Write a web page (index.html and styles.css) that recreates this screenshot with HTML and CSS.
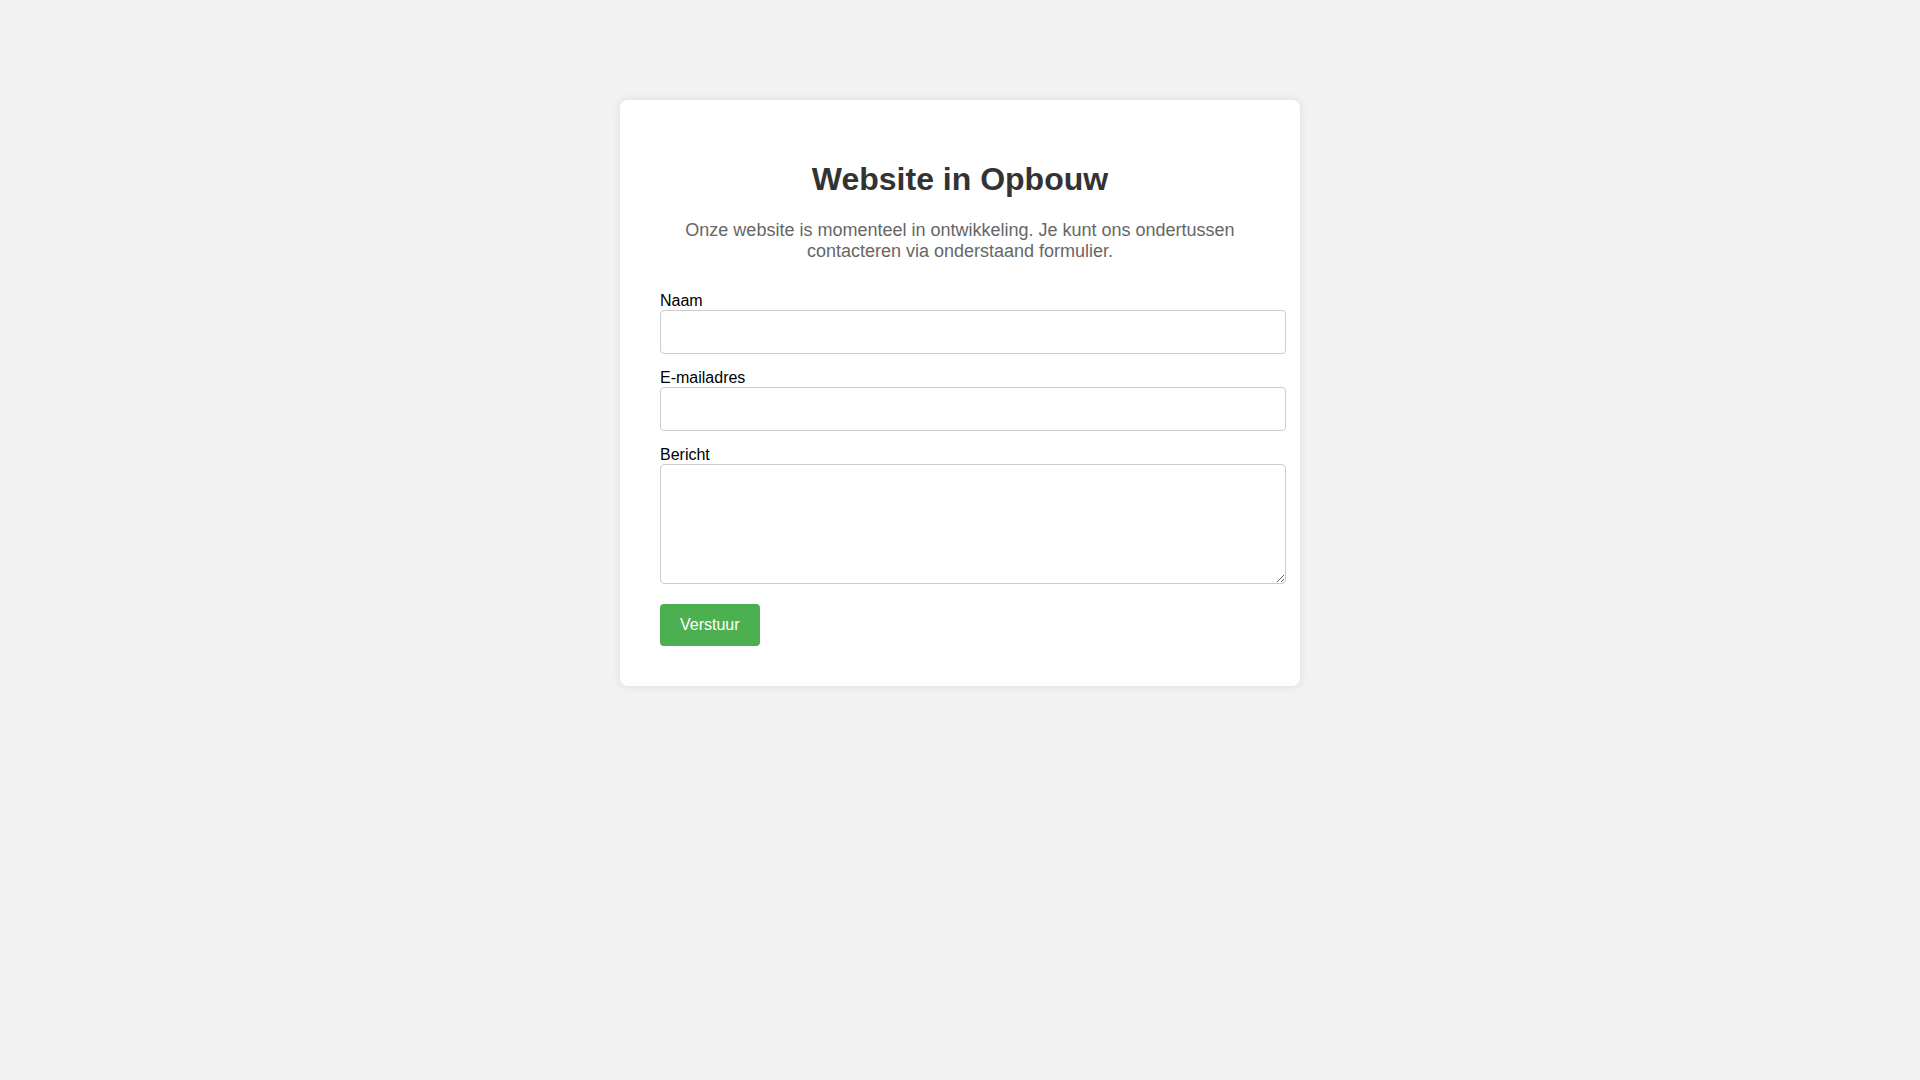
FILE: index.html
```html
<!DOCTYPE html>
<html lang="nl">
	<head>
		<meta charset="utf-8">
		<title>Website in Opbouw</title>
		<link rel="stylesheet" href="styles.css">
	</head>
	<body>

	<div class="container">
		<h1>Website in Opbouw</h1>
		<p class="intro">Onze website is momenteel in ontwikkeling. Je kunt ons ondertussen contacteren via onderstaand formulier.</p>

		<form class="contact-form" action="#">
			<label for="naam">Naam</label>
			<input type="text" id="naam" name="naam">

			<label for="email">E-mailadres</label>
			<input type="email" id="email" name="email">

			<label for="bericht">Bericht</label>
			<textarea id="bericht" name="bericht"></textarea>

			<button type="submit">Verstuur</button>
		</form>
	</div>

	</body>
</html>
```

FILE: styles.css
```css
body {
	margin: 0;
	padding: 100px 0;
	background: #f2f2f2;
	font-family: "Liberation Sans", Arial, sans-serif;
}
.container {
	width: 600px;
	margin: 0 auto;
	padding: 40px;
	background: #fff;
	border-radius: 8px;
	box-shadow: 0 0 10px rgba(0, 0, 0, 0.1);
	text-align: center;
}
h1 {
	font-size: 32px;
	margin: 0.67em 0;
	color: #333;
}
.intro {
	font-size: 18px;
	color: #666;
	margin: 0 0 30px;
}
.contact-form {
	text-align: left;
}
.contact-form label {
	display: block;
	font-size: 16px;
	color: #000;
}
.contact-form input,
.contact-form textarea {
	display: block;
	width: 100%;
	padding: 12px;
	margin: 0 0 15px;
	border: 1px solid #ccc;
	border-radius: 4px;
	font-family: "Liberation Sans", Arial, sans-serif;
	font-size: 16px;
}
.contact-form textarea {
	height: 94px;
	margin-bottom: 20px;
}
.contact-form button {
	display: block;
	padding: 12px 20px;
	border: none;
	border-radius: 4px;
	background: #4caf50;
	color: #fff;
	font-family: "Liberation Sans", Arial, sans-serif;
	font-size: 16px;
	cursor: pointer;
}
```
